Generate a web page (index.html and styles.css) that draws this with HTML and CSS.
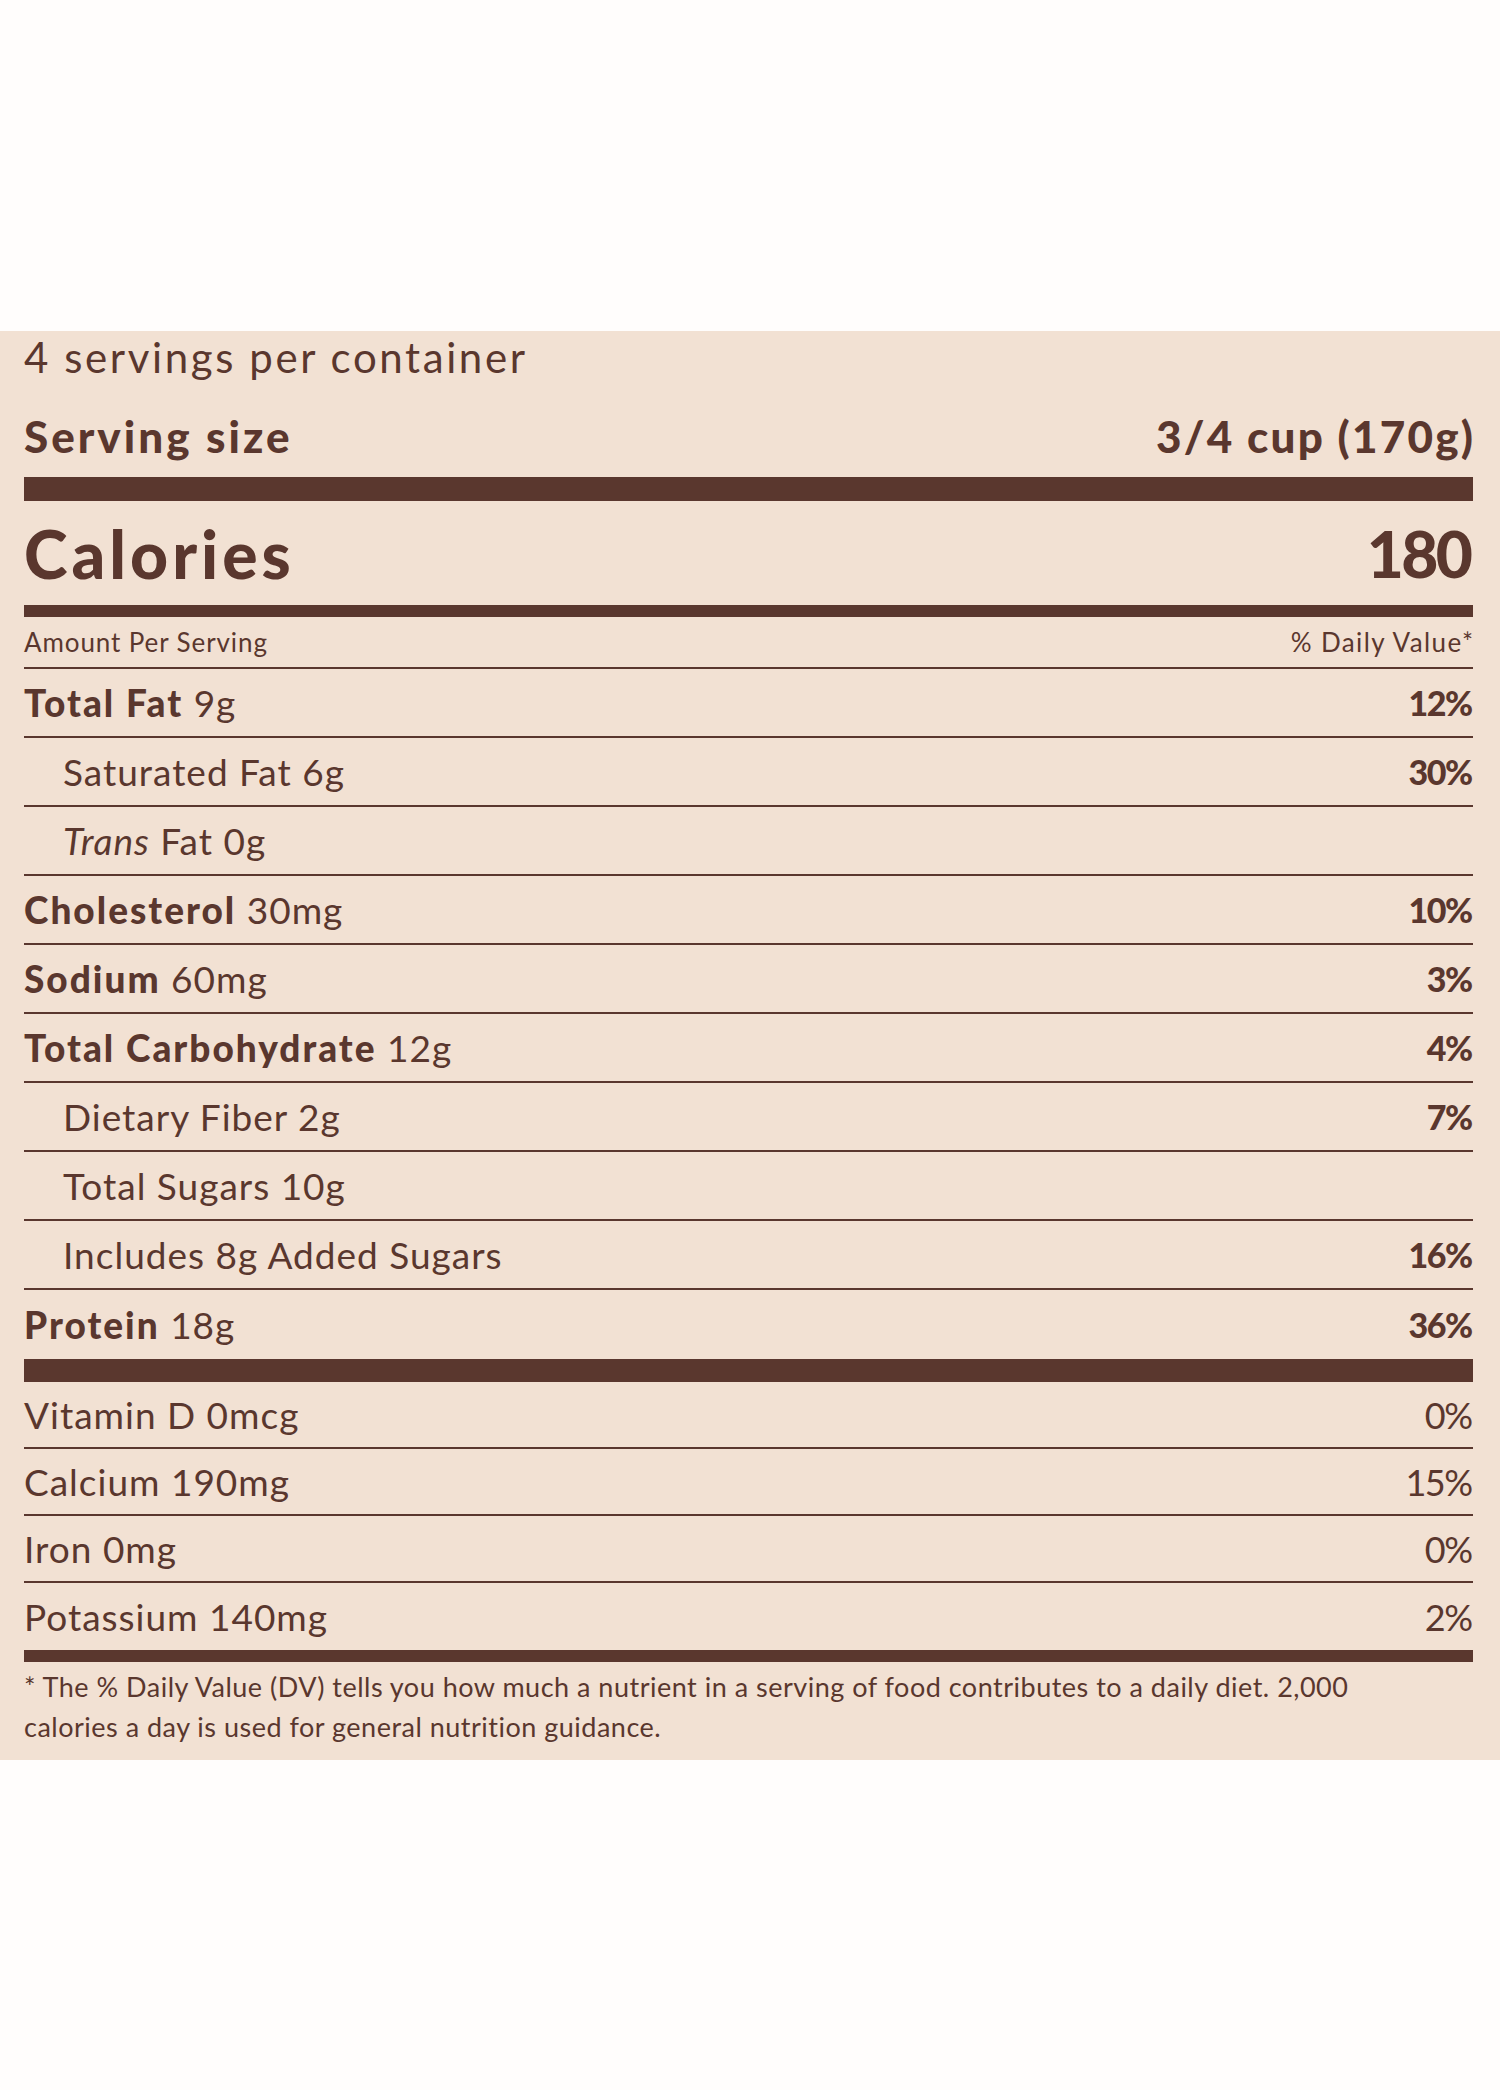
FILE: index.html
```html
<!DOCTYPE html>
<html lang="en">
<head>
<meta charset="utf-8">
<title>Nutrition Facts</title>
<link rel="stylesheet" href="styles.css">
</head>
<body>
<section class="label">
  <div class="servings">4 servings per container</div>
  <div class="serving-size"><span class="ss-label">Serving size</span><span class="ss-value">3/4 cup (170g)</span></div>
  <div class="bar bar-thick"></div>
  <div class="calories"><span class="cal-label">Calories</span><span class="cal-value">180</span></div>
  <div class="bar bar-medium"></div>
  <div class="row head"><span>Amount Per Serving</span><span class="dv">% Daily Value*</span></div>
  <div class="row"><span><b>Total Fat</b> 9g</span><b class="pct">12%</b></div>
  <div class="row sub"><span>Saturated Fat 6g</span><b class="pct">30%</b></div>
  <div class="row sub"><span><i>Trans</i> Fat 0g</span></div>
  <div class="row"><span><b>Cholesterol</b> 30mg</span><b class="pct">10%</b></div>
  <div class="row"><span><b>Sodium</b> 60mg</span><b class="pct">3%</b></div>
  <div class="row"><span><b>Total Carbohydrate</b> 12g</span><b class="pct">4%</b></div>
  <div class="row sub"><span>Dietary Fiber 2g</span><b class="pct">7%</b></div>
  <div class="row sub"><span>Total Sugars 10g</span></div>
  <div class="row sub"><span>Includes 8g Added Sugars</span><b class="pct">16%</b></div>
  <div class="row last"><span><b>Protein</b> 18g</span><b class="pct">36%</b></div>
  <div class="bar bar-thick2"></div>
  <div class="row vit"><span>Vitamin D 0mcg</span><span class="pct">0%</span></div>
  <div class="row vit"><span>Calcium 190mg</span><span class="pct">15%</span></div>
  <div class="row vit"><span>Iron 0mg</span><span class="pct">0%</span></div>
  <div class="row vit last"><span>Potassium 140mg</span><span class="pct">2%</span></div>
  <div class="bar bar-medium2"></div>
  <p class="foot">* The % Daily Value (DV) tells you how much a nutrient in a serving of food contributes to a daily diet. 2,000 calories a day is used for general nutrition guidance.</p>
</section>
</body>
</html>
```

FILE: styles.css
```css
html, body {
  margin: 0;
  padding: 0;
  background: #fffdfc;
}
body {
  font-family: "Lato", "Liberation Sans", sans-serif;
  color: #5a372e;
}
.label {
  margin-top: 331px;
  height: 1429px;
  box-sizing: border-box;
  background: #f2e1d3;
  padding: 0 27px 0 24px;
}
.servings {
  height: 52px;
  line-height: 52px;
  font-size: 42px;
  letter-spacing: 2.6px;
}
.serving-size {
  display: flex;
  justify-content: space-between;
  align-items: center;
  box-sizing: border-box;
  height: 94px;
  padding-top: 12px;
  font-size: 44px;
  font-weight: 900;
}
.ss-label { letter-spacing: 3px; }
.ss-value { letter-spacing: 2.2px; margin-right: -2.2px; }
.bar {
  background: #5a372e;
}
.bar-thick { height: 24px; }
.bar-thick2 { height: 23px; }
.bar-medium { height: 12px; }
.bar-medium2 { height: 12px; }
.calories {
  display: flex;
  justify-content: space-between;
  align-items: center;
  height: 104px;
  font-size: 66px;
  font-weight: 900;
}
.cal-label { letter-spacing: 4px; }
.cal-value { font-size: 64px; letter-spacing: -2.5px; margin-right: 2.5px; }
.row {
  display: flex;
  justify-content: space-between;
  align-items: center;
  height: 69px;
  box-sizing: border-box;
  border-bottom: 2px solid #5a372e;
  font-size: 37px;
  letter-spacing: 1px;
}
.row b { font-weight: 900; letter-spacing: 2px; }
.row .pct { font-size: 34px; letter-spacing: -1.5px; margin-right: 1.5px; }
.row.head {
  height: 52px;
  font-size: 26px;
  letter-spacing: 0.9px;
}
.row.head .dv { letter-spacing: 1.4px; margin-right: -1.4px; }
.row.sub span:first-child {
  padding-left: 39px;
}
.row.last { border-bottom: none; }
.row.vit { height: 67px; }
.row.vit .pct { font-size: 36px; }
.foot {
  margin: 0;
  padding: 5px 40px 0 0;
  font-size: 27px;
  line-height: 40px;
  letter-spacing: 0.5px;
}
```
